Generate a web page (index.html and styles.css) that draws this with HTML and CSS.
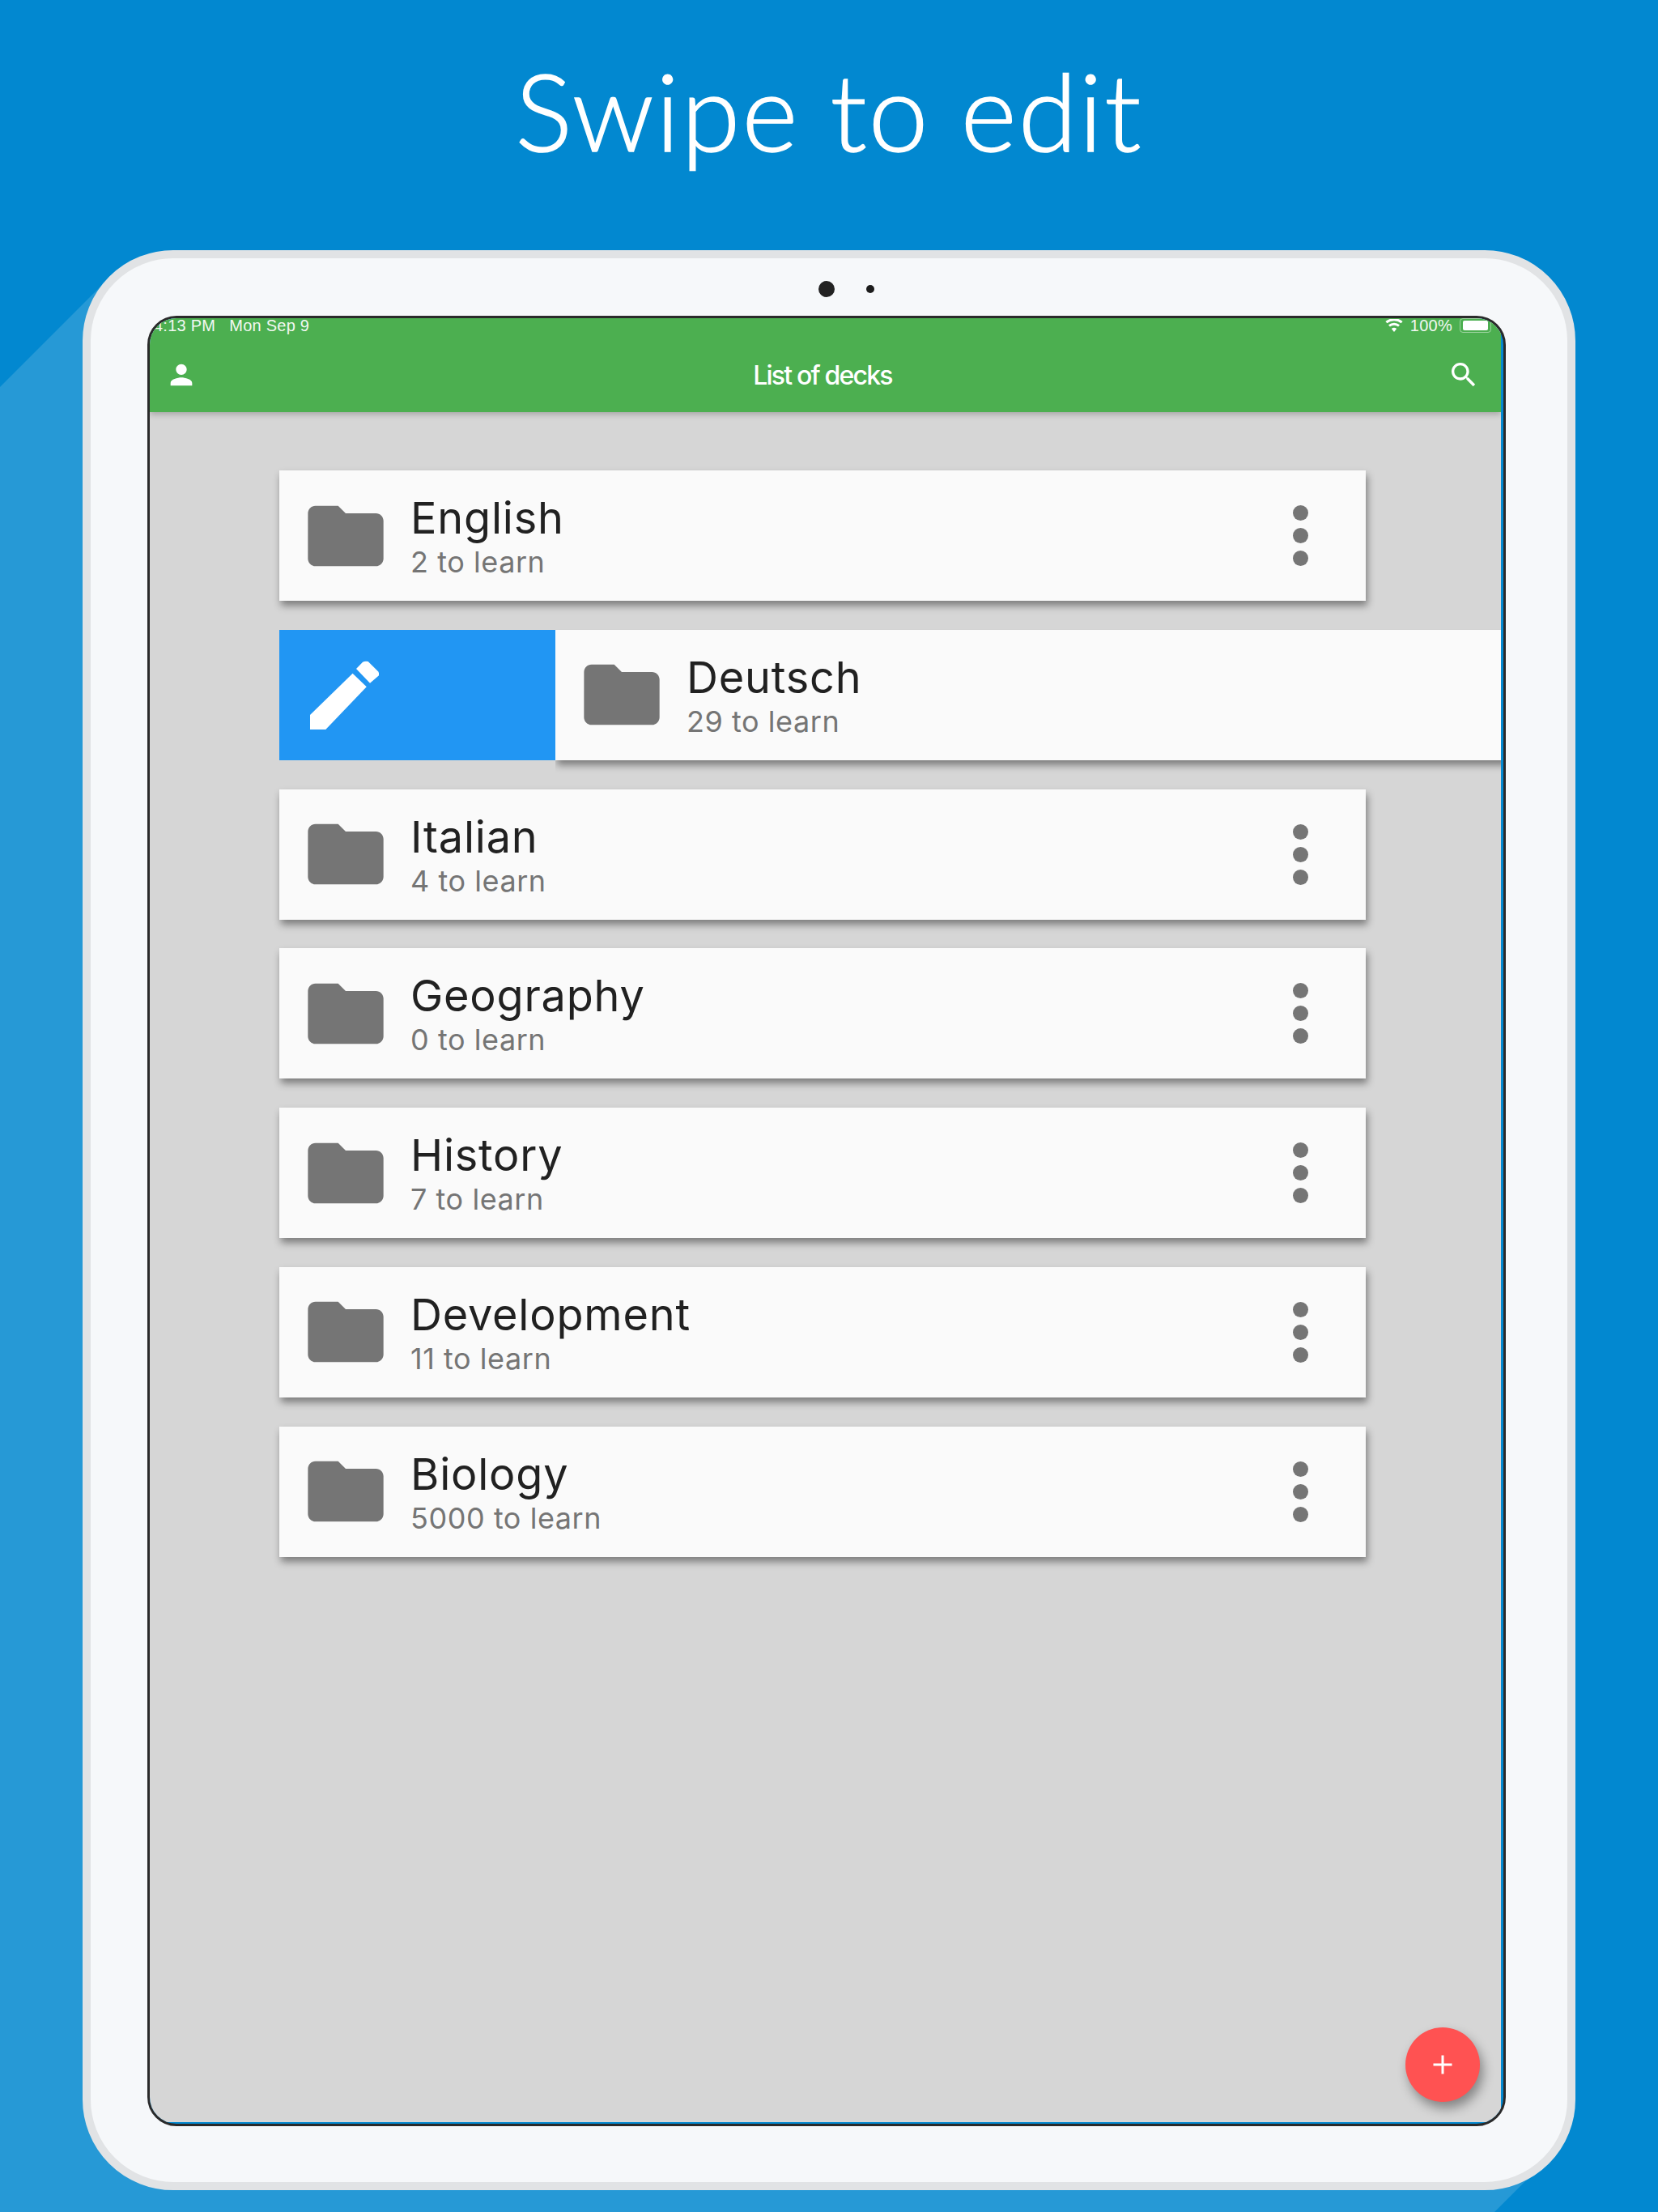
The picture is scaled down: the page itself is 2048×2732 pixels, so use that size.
FILE: index.html
```html
<!DOCTYPE html>
<html lang="en">
<head>
<meta charset="utf-8">
<title>Swipe to edit</title>
<link rel="stylesheet" href="styles.css">
</head>
<body>
<svg class="defs" aria-hidden="true">
  <symbol id="folder" viewBox="0 0 24 24"><path d="M10 4H4c-1.1 0-1.99.9-1.99 2L2 18c0 1.1.9 2 2 2h16c1.1 0 2-.9 2-2V8c0-1.1-.9-2-2-2h-8l-2-2z"/></symbol>
</svg>
<div class="page">
  <h1 class="headline">Swipe to edit</h1>
  <div class="device">
    <div class="cameras"><span class="cam-big"></span><span class="cam-small"></span></div>
    <div class="frame">
      <div class="screen">
        <header class="appbar">
          <div class="status">
            <span class="status-left"><span>4:13 PM</span><span>Mon Sep 9</span></span>
            <span class="status-right">
              <svg class="wifi" viewBox="0 0 22 16"><path d="M11 16l-3.2-4a5 5 0 0 1 6.4 0zM5.9 9.6L4 7.3a11 11 0 0 1 14 0l-1.900 2.300a8 8 0 0 0-10.200 0zM2.400 5.300L.4 3a16.500 16.500 0 0 1 21.200 0l-2 2.300a13.400 13.400 0 0 0-17.200 0z"/></svg>
              <span>100%</span>
              <span class="battery"><span class="battery-fill"></span></span>
            </span>
          </div>
          <div class="toolbar">
            <svg class="bar-icon" viewBox="0 0 24 24"><path d="M12 12c2.210 0 4-1.790 4-4s-1.790-4-4-4-4 1.790-4 4 1.790 4 4 4zm0 2c-2.670 0-8 1.340-8 4v2h16v-2c0-2.660-5.330-4-8-4z"/></svg>
            <div class="bar-title">List of decks</div>
            <svg class="bar-icon" viewBox="0 0 24 24"><path d="M15.500 14h-.79l-.28-.27C15.410 12.590 16 11.110 16 9.500 16 5.910 13.090 3 9.500 3S3 5.910 3 9.500 5.910 16 9.500 16c1.610 0 3.090-.59 4.230-1.570l.27.28v.79l5 4.990L20.490 19l-4.990-5zm-6 0C7.010 14 5 11.990 5 9.500S7.010 5 9.500 5 14 7.010 14 9.500 11.990 14 9.500 14z"/></svg>
          </div>
        </header>
        <main class="decks">
          <div class="deck">
            <svg class="folder"><use href="#folder"/></svg>
            <div class="deck-text"><div class="deck-name">English</div><div class="deck-sub">2 to learn</div></div>
            <div class="more"><i></i><i></i><i></i></div>
          </div>
          <div class="swipe-row">
            <div class="swipe-action">
              <svg class="pencil" viewBox="0 0 85 85"><path d="M0 85V67L52.600 15.700 69.800 32.300 19.300 85z"/><path d="M57 10L65 1.700Q68 0 71.700 1L84 13.300Q86 16 85 18.300L74 27.700z"/></svg>
            </div>
            <div class="deck deck-swiped">
              <svg class="folder"><use href="#folder"/></svg>
              <div class="deck-text"><div class="deck-name">Deutsch</div><div class="deck-sub">29 to learn</div></div>
            </div>
          </div>
          <div class="deck">
            <svg class="folder"><use href="#folder"/></svg>
            <div class="deck-text"><div class="deck-name">Italian</div><div class="deck-sub">4 to learn</div></div>
            <div class="more"><i></i><i></i><i></i></div>
          </div>
          <div class="deck">
            <svg class="folder"><use href="#folder"/></svg>
            <div class="deck-text"><div class="deck-name">Geography</div><div class="deck-sub">0 to learn</div></div>
            <div class="more"><i></i><i></i><i></i></div>
          </div>
          <div class="deck">
            <svg class="folder"><use href="#folder"/></svg>
            <div class="deck-text"><div class="deck-name">History</div><div class="deck-sub">7 to learn</div></div>
            <div class="more"><i></i><i></i><i></i></div>
          </div>
          <div class="deck">
            <svg class="folder"><use href="#folder"/></svg>
            <div class="deck-text"><div class="deck-name">Development</div><div class="deck-sub">11 to learn</div></div>
            <div class="more"><i></i><i></i><i></i></div>
          </div>
          <div class="deck">
            <svg class="folder"><use href="#folder"/></svg>
            <div class="deck-text"><div class="deck-name">Biology</div><div class="deck-sub">5000 to learn</div></div>
            <div class="more"><i></i><i></i><i></i></div>
          </div>
        </main>
        <div class="fab"><svg viewBox="0 0 24 24"><path d="M.5 10.500h10V.5h3v10h10v3h-10v10h-3v-10H.5z"/></svg></div>
      </div>
    </div>
  </div>
</div>
</body>
</html>
```

FILE: styles.css
```css
* { box-sizing: border-box; }
html, body { margin: 0; padding: 0; }
body { background: #0288d0; }
.defs { position: absolute; width: 0; height: 0; }

.page {
  position: relative;
  width: 2048px;
  height: 2732px;
  overflow: hidden;
  background: #0288d0;
}
.page::before {
  content: "";
  position: absolute;
  inset: 0;
  background: #2699d6;
  clip-path: polygon(0 478px, 130px 348px, 1900px 2678px, 1846px 2732px, 0 2732px);
}

.headline {
  position: relative;
  margin: 0;
  height: 309px;
  padding-top: 56px;
  text-align: center;
  font-family: "Lato", sans-serif;
  font-weight: 300;
  font-size: 132px;
  line-height: 160px;
  letter-spacing: 2.2px;
  -webkit-text-stroke: 1.5px #fff;
  color: #fff;
}

.device {
  position: relative;
  width: 1844px;
  height: 2396px;
  margin-left: 102px;
  padding: 0 76px 70px 70px;
  background: #f6f8fa;
  border: 10px solid #e1e3e5;
  border-radius: 112px;
}
.cameras {
  display: flex;
  justify-content: center;
  align-items: center;
  gap: 39px;
  height: 71px;
  padding: 5px 0 0 48px;
}
.cam-big { width: 20px; height: 20px; border-radius: 50%; background: #222; }
.cam-small { width: 10px; height: 10px; border-radius: 50%; background: #1c1c1c; }

.frame {
  height: 2236px;
  padding: 0 3px 2px 0;
  background: #0288d0;
  border: 3px solid #2a2a2a;
  border-radius: 36px;
  overflow: hidden;
}
.screen {
  position: relative;
  display: flex;
  flex-direction: column;
  height: 100%;
  overflow: hidden;
  background: #d6d6d6;
  font-family: "Inter", sans-serif;
}

.appbar {
  position: relative;
  z-index: 1;
  height: 116px;
  background: #4caf50;
  color: #fff;
  box-shadow: 0 3px 7px rgba(0, 0, 0, .22);
}
.status {
  display: flex;
  justify-content: space-between;
  height: 24px;
  padding: 0 12px 0 5px;
  font-family: "Liberation Sans", sans-serif;
  font-size: 20px;
  line-height: 20px;
  letter-spacing: .25px;
  color: #f2f8f2;
}
.status-left { display: flex; gap: 17px; margin-top: -1px; }
.status-right { display: flex; align-items: flex-start; gap: 9px; margin-top: -1px; }
.wifi { width: 22px; height: 16px; margin-top: 2px; fill: #fff; }
.battery {
  display: block;
  width: 39px;
  height: 18px;
  margin-top: 1px;
  padding: 2px 3px;
  border: 1px solid rgba(255, 255, 255, .45);
  border-radius: 4px;
}
.battery-fill { display: block; height: 100%; background: #fff; border-radius: 2px; }

.toolbar {
  display: flex;
  align-items: center;
  height: 92px;
  padding: 0 26px 0 19px;
}
.bar-icon { width: 40px; height: 40px; fill: #fff; }
.bar-title {
  flex: 1;
  text-align: center;
  font-size: 32px;
  font-weight: 500;
  letter-spacing: -1.8px;
}

.decks {
  flex: 1;
  display: flex;
  flex-direction: column;
  gap: 35.8px;
  padding: 72px 0 0 160px;
}
.deck {
  display: flex;
  align-items: center;
  width: 1342px;
  height: 161px;
  padding: 0 71px 0 26px;
  background: #fafafa;
  box-shadow: 2px 6px 9px rgba(0, 0, 0, .42);
}
.folder { flex: none; width: 112px; height: 112px; fill: #757575; }
.deck-text { flex: 1; margin-left: 24px; padding-top: 3px; }
.deck-name {
  font-size: 54px;
  line-height: 62px;
  letter-spacing: .8px;
  color: #212121;
}
.deck-sub {
  font-size: 36px;
  line-height: 46px;
  letter-spacing: .55px;
  color: #757575;
}
.more { display: flex; flex-direction: column; gap: 9px; }
.more i { display: block; width: 19px; height: 19px; border-radius: 50%; background: #757575; }

.swipe-row { display: flex; width: 1530px; height: 161px; }
.swipe-action {
  flex: none;
  display: flex;
  align-items: center;
  width: 341px;
  padding-left: 38px;
  background: #2196f3;
}
.pencil { width: 85px; height: 85px; fill: #fff; }
.deck-swiped { flex: 1; width: auto; padding-right: 0; clip-path: inset(0 0 -20px 0); }

.fab {
  position: absolute;
  right: 26px;
  bottom: 25px;
  display: flex;
  align-items: center;
  justify-content: center;
  width: 92px;
  height: 92px;
  border-radius: 50%;
  background: #ff5252;
  box-shadow: 4px 8px 14px rgba(0, 0, 0, .38);
}
.fab svg { width: 24px; height: 24px; fill: #fff; }
```
